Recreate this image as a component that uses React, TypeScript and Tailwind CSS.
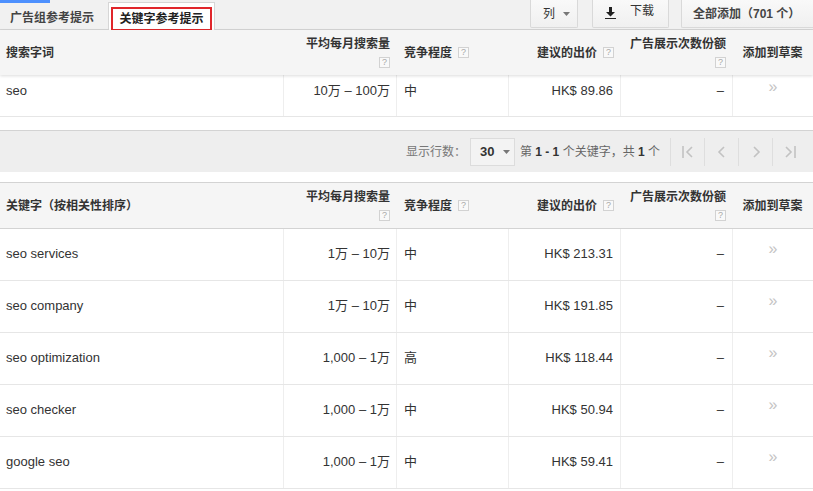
import React from "react";

interface Row {
  keyword: string;
  volume: string;
  competition: string;
  bid: string;
}

const rows: Row[] = [
  { keyword: "seo services", volume: "1万 – 10万", competition: "中", bid: "HK$ 213.31" },
  { keyword: "seo company", volume: "1万 – 10万", competition: "中", bid: "HK$ 191.85" },
  { keyword: "seo optimization", volume: "1,000 – 1万", competition: "高", bid: "HK$ 118.44" },
  { keyword: "seo checker", volume: "1,000 – 1万", competition: "中", bid: "HK$ 50.94" },
  { keyword: "google seo", volume: "1,000 – 1万", competition: "中", bid: "HK$ 59.41" },
];

const cols = "grid grid-cols-[283px_113px_112px_112px_112px_81px]";

function Help() {
  return (
    <span className="inline-flex h-[11px] w-[11px] items-center justify-center border border-[#d2d2d2] bg-[#f9f9f9] text-[9px] font-normal leading-none text-[#a8a8a8]">
      ?
    </span>
  );
}

function HeaderRow({ label, className }: { label: string; className: string }) {
  return (
    <div className={`${cols} bg-[#f5f5f5] text-[12px] font-bold leading-[14px] text-[#333] ${className}`}>
      <div className="flex items-center pl-[6px]">{label}</div>
      <div className="flex flex-col items-end justify-center pr-[6px]">
        <span>平均每月搜索量</span>
        <span className="mt-[3px]">
          <Help />
        </span>
      </div>
      <div className="flex items-center gap-[6px] pl-[8px]">
        <span>竞争程度</span>
        <Help />
      </div>
      <div className="flex items-center justify-end gap-[6px] pr-[6px]">
        <span>建议的出价</span>
        <Help />
      </div>
      <div className="flex flex-col items-end justify-center pr-[6px]">
        <span>广告展示次数份额</span>
        <span className="mt-[3px]">
          <Help />
        </span>
      </div>
      <div className="flex items-center justify-center">添加到草案</div>
    </div>
  );
}

function BodyRow({ row, tall }: { row: Row; tall: boolean }) {
  const pad = tall ? "pt-[17px]" : "pt-[8px]";
  return (
    <div className={`${cols} ${tall ? "h-[52px]" : "h-[42px]"} border-b border-[#e6e6e6] text-[13px] leading-[16px] text-[#333]`}>
      <div className={`pl-[6px] ${pad}`}>{row.keyword}</div>
      <div className={`border-l border-[#eeeeee] pr-[6px] text-right ${pad}`}>{row.volume}</div>
      <div className={`border-l border-[#eeeeee] pl-[7px] ${pad}`}>{row.competition}</div>
      <div className={`border-l border-[#eeeeee] pr-[7px] text-right ${pad}`}>{row.bid}</div>
      <div className={`border-l border-[#eeeeee] pr-[8px] text-right ${pad}`}>–</div>
      <div className={`border-l border-[#eeeeee] text-center text-[16px] text-[#c4c4c4] ${tall ? "pt-[12px]" : "pt-[4px]"}`}>»</div>
    </div>
  );
}

function Caret() {
  return (
    <svg width="7" height="4" viewBox="0 0 7 4">
      <path d="M0 0h7L3.5 4z" fill="#777" />
    </svg>
  );
}

function NavIcon({ kind }: { kind: "first" | "prev" | "next" | "last" }) {
  return (
    <svg width="16" height="14" viewBox="0 0 16 14" fill="none" stroke="#c2c2c2" strokeWidth="1.6">
      {kind === "first" && (
        <>
          <path d="M3 1v12" />
          <path d="M12 2L7 7l5 5" />
        </>
      )}
      {kind === "prev" && <path d="M10 2L5 7l5 5" />}
      {kind === "next" && <path d="M6 2l5 5-5 5" />}
      {kind === "last" && (
        <>
          <path d="M4 2l5 5-5 5" />
          <path d="M13 1v12" />
        </>
      )}
    </svg>
  );
}

export default function App() {
  return (
    <div className="h-[491px] w-[813px] overflow-hidden bg-white font-['Liberation_Sans','Noto_Sans_CJK_SC',sans-serif]">
      {/* tab bar */}
      <div className="relative flex h-[30px] border-b border-[#d6d6d6] bg-[#f1f1f1]">
        <div className="absolute left-0 top-0 h-[3px] w-[50px] bg-[#4d90fe]" />
        <div className="flex w-[103px] shrink-0 items-end whitespace-nowrap pb-[4px] pl-[10px] text-[12px] font-bold leading-[14px] text-[#444]">
          广告组参考提示
        </div>
        <div className="ml-[5px] mt-[2px] -mb-px h-[29px] w-[107px] shrink-0 border-x border-t border-[#d6d6d6] bg-white px-[2px] pt-[4px]">
          <div className="flex h-[24px] items-center justify-center whitespace-nowrap border-2 border-[#e0262b] text-[12px] font-bold leading-[14px] text-[#222]">
            关键字参考提示
          </div>
        </div>
        <div className="ml-[315px] flex shrink-0 items-start whitespace-nowrap text-[12px] leading-[14px] text-[#333]">
          <div className="flex h-[28px] w-[48px] items-center gap-[8px] rounded-b-[2px] border-x border-b border-[#d9d9d9] bg-gradient-to-b from-[#f9f9f9] to-[#f0f0f0] pl-[12px]">
            <span>列</span>
            <Caret />
          </div>
          <div className="ml-[14px] flex h-[28px] w-[77px] items-center rounded-b-[2px] border-x border-b border-[#d9d9d9] bg-gradient-to-b from-[#f9f9f9] to-[#f0f0f0] pl-[12px]">
            <svg width="11" height="12" viewBox="0 0 11 12" className="mt-[-2px]">
              <path d="M4 0h3v5h3L5.5 9.5 1 5h3z" fill="#222" />
              <path d="M0 11h11v1.5H0z" fill="#222" />
            </svg>
            <span className="ml-[14px] mt-[-6px]">下载</span>
          </div>
          <div className="ml-[12px] flex h-[28px] w-[132px] items-center rounded-bl-[2px] border-b border-l border-[#d9d9d9] bg-gradient-to-b from-[#f9f9f9] to-[#f0f0f0] pl-[11px] font-bold text-[#444]">
            全部添加（701 个）
          </div>
        </div>
      </div>

      {/* search term table */}
      <HeaderRow label="搜索字词" className="relative z-10 h-[45px] shadow-[0_1px_3px_rgba(0,0,0,0.14)]" />
      <BodyRow row={{ keyword: "seo", volume: "10万 – 100万", competition: "中", bid: "HK$ 89.86" }} tall={false} />

      {/* pagination */}
      <div className="mt-[13px] flex h-[42px] items-center justify-end border-t border-[#d3d3d3] bg-[#eeeeee] pr-[7px] text-[12px] leading-[14px] text-[#777]">
        <span>显示行数：</span>
        <div className="ml-[4px] flex h-[28px] w-[45px] items-center gap-[9px] border border-[#dcdcdc] bg-[#f3f3f3] pl-[9px]">
          <span className="text-[13px] font-bold text-[#333]">30</span>
          <Caret />
        </div>
        <span className="ml-[5px] text-[#666]">
          第 <b className="text-[#333]">1 - 1</b> 个关键字，共 <b className="text-[#333]">1</b> 个
        </span>
        <div className="ml-[10px] flex h-[28px]">
          <div className="flex w-[34px] items-center justify-center border-l border-[#dedede]">
            <NavIcon kind="first" />
          </div>
          <div className="flex w-[34px] items-center justify-center border-l border-[#dedede]">
            <NavIcon kind="prev" />
          </div>
          <div className="flex w-[34px] items-center justify-center border-l border-[#dedede]">
            <NavIcon kind="next" />
          </div>
          <div className="flex w-[34px] items-center justify-center border-l border-[#dedede]">
            <NavIcon kind="last" />
          </div>
        </div>
      </div>

      {/* keyword ideas table */}
      <HeaderRow label="关键字（按相关性排序）" className="mt-[10px] h-[47px] border-y border-[#d3d3d3]" />
      {rows.map((row) => (
        <BodyRow key={row.keyword} row={row} tall />
      ))}
    </div>
  );
}
